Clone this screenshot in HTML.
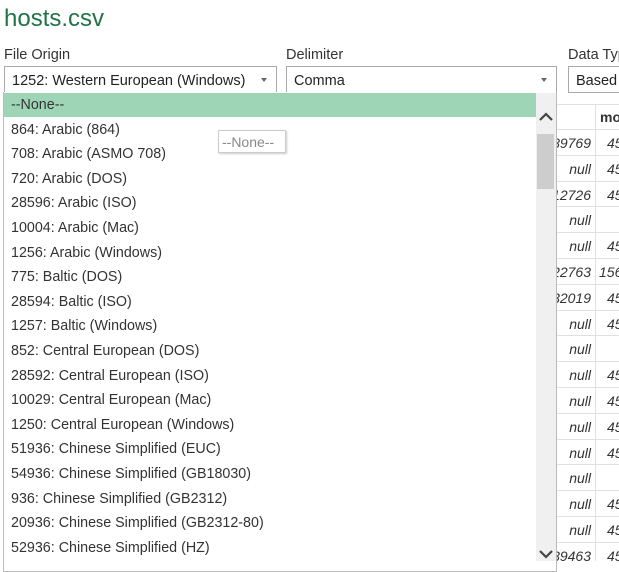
<!DOCTYPE html>
<html><head><style>
*{margin:0;padding:0;box-sizing:border-box}
body{width:619px;height:561px;overflow:hidden;background:#fff;font-family:"Liberation Sans",sans-serif;color:#222;position:relative}
.a{position:absolute;white-space:nowrap}
.sel{position:absolute;border:1px solid #aaa;height:27px;font-size:14.5px;padding:6px 0 0 7px;background:#fff;overflow:hidden;white-space:nowrap}
.car{position:absolute;right:9px;top:11px;width:0;height:0;border-left:3.5px solid transparent;border-right:3.5px solid transparent;border-top:4px solid #666}
.lbl{font-size:14.5px;color:#333}
.row{position:absolute;left:0;width:619px;height:1px;background:#e0e0e0}
.v{position:absolute;font-style:italic;font-size:14px;color:#333;text-align:right}
.it{position:absolute;left:11px;font-size:14.3px;color:#333;white-space:nowrap}
</style></head><body>
<div class="a" style="left:4px;top:5px;font-size:24px;color:#217346;">hosts.csv</div>
<div class="a lbl" style="left:4px;top:47px">File Origin</div>
<div class="a lbl" style="left:286px;top:47px">Delimiter</div>
<div class="a lbl" style="left:568px;top:47px">Data Type</div>
<div class="sel" style="left:4px;top:66px;width:273px">1252: Western European (Windows)<div class="car"></div></div>
<div class="sel" style="left:286px;top:66px;width:271px">Comma<div class="car"></div></div>
<div class="sel" style="left:568px;top:66px;width:60px">Based o</div>

<div style="position:absolute;left:556px;top:104px;width:1px;height:457px;background:#e0e0e0"></div>
<div style="position:absolute;left:595px;top:104px;width:1px;height:457px;background:#e0e0e0"></div>
<div style="position:absolute;left:556px;top:104px;width:63px;height:1px;background:#e0e0e0"></div>
<div class="a" style="left:600px;top:109px;font-size:14px;font-weight:bold;color:#333">mo</div>
<div id="tbl"></div>

<div style="position:absolute;left:3px;top:92px;width:554px;height:480px;background:#fff;border:1px solid #bbb;border-top:none"></div>
<div style="position:absolute;left:4px;top:93px;width:532px;height:24px;background:#9fd5b7"></div>
<div style="position:absolute;left:536px;top:93px;width:20px;height:468px;background:#f0f0f0"></div>
<div style="position:absolute;left:537px;top:134px;width:17px;height:55px;background:#cdcdcd"></div>
<svg style="position:absolute;left:538px;top:111px" width="16" height="12"><path d="M2 9 L8 3 L14 9" stroke="#444" stroke-width="2.2" fill="none"/></svg>
<svg style="position:absolute;left:538px;top:548px" width="16" height="12"><path d="M2 3 L8 9 L14 3" stroke="#444" stroke-width="2.2" fill="none"/></svg>
<div id="items"></div>
<div class="a" style="left:218px;top:130px;width:68px;height:23px;border:1px solid #ccc;box-shadow:1px 1px 2px rgba(0,0,0,.2);background:#fff;font-size:14px;color:#888;padding:3px 0 0 3px">--None--</div>
<script>
var items=["--None--","864: Arabic (864)","708: Arabic (ASMO 708)","720: Arabic (DOS)","28596: Arabic (ISO)","10004: Arabic (Mac)","1256: Arabic (Windows)","775: Baltic (DOS)","28594: Baltic (ISO)","1257: Baltic (Windows)","852: Central European (DOS)","28592: Central European (ISO)","10029: Central European (Mac)","1250: Central European (Windows)","51936: Chinese Simplified (EUC)","54936: Chinese Simplified (GB18030)","936: Chinese Simplified (GB2312)","20936: Chinese Simplified (GB2312-80)","52936: Chinese Simplified (HZ)"];
var h="";
items.forEach(function(t,i){h+='<div class="it" style="top:'+(97+i*24.6)+'px">'+t+'</div>';});
document.getElementById("items").innerHTML=h;
var rows=[["89769","45"],["null","45"],["12726","45"],["null",""],["null","45"],["22763","156"],["32019","45"],["null","45"],["null",""],["null","45"],["null","45"],["null","45"],["null","45"],["null",""],["null","45"],["null","45"],["39463","45"]];
var t="";
rows.forEach(function(r,i){var y=129+i*25.8;
t+='<div class="row" style="left:556px;width:63px;top:'+y+'px"></div>';
t+='<div class="v" style="left:540px;width:51px;top:'+(y+6)+'px">'+r[0]+'</div>';
t+='<div class="v" style="left:'+(r[1].length>2?599:607)+'px;top:'+(y+6)+'px;text-align:left">'+r[1]+'</div>';});
document.getElementById("tbl").innerHTML=t;
</script>
</body></html>
